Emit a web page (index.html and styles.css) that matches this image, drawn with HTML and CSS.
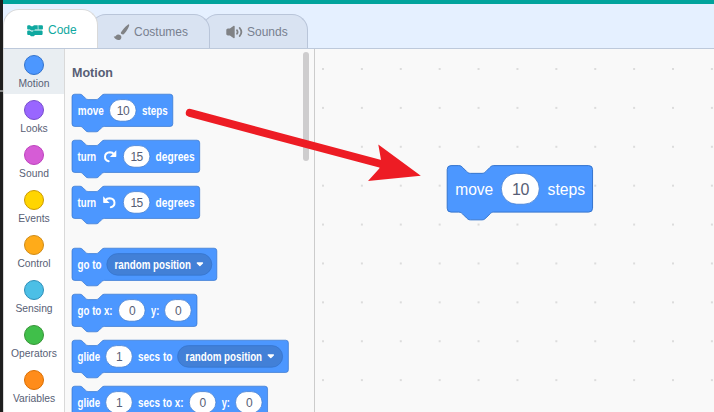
FILE: index.html
```html
<!DOCTYPE html>
<html lang="en">
<head>
<meta charset="utf-8">
<title>Code editor</title>
<link rel="stylesheet" href="styles.css">
</head>
<body>
<div class="app">
  <div class="edge"><i></i></div>
  <div class="editor">
    <header class="menubar"></header>
    <nav class="tabs">
      <div class="tab code">
        <svg width="17" height="13" viewBox="0 0 17 13"><path d="M.9 1.300H3l1 .9h1.900l1-.9h8.300l.7.700v2.900l-.7.700H8l-1 .9H4l-1-.9H.9l-.7-.7V2zM.9 6.600H3l1 .9h1.900l1-.9h8l.7.700v3l-.7.700H8l-1.200 1.200H4L2.800 11H.9l-.7-.7v-3z" fill="#0fa8a0"/><path d="M11 1l.2 4.500" stroke="#fff" stroke-width=".6"/></svg>
        <span>Code</span>
      </div>
      <div class="tab costumes">
        <svg width="17" height="17" viewBox="0 0 17 17"><path d="M16 .4c.5.4.1 1.8-.8 3.5-1.200 2.300-2.900 4.900-4.500 6.300-.7.6-1.400.5-2.100-.1-.8-.7-1-1.400-.4-2.200C9.700 5.700 12.300 2.700 14.300 1.200 15.200.5 15.700.2 16 .4zM.7 12.300c.8.4 1.500.3 2.200-.6 1.100-1.500 3.200-1.700 4.600-.4 1.200 1.200 1.200 3-.1 4.100-1.800 1.400-5.500.500-6.700-3.100z" fill="#808285"/></svg>
        <span>Costumes</span>
      </div>
      <div class="tab sounds">
        <svg width="17" height="14" viewBox="0 0 17 14"><path d="M.3 4.600 1.700 3.600h2.200L7.400.900c.6-.4 1.300-.2 1.300.6v11c0 .8-.7 1-1.300.6L3.900 10.400H1.700L.3 9.400z" fill="#808285"/><path d="M11 5.300c.8 1.200.8 2.400 0 3.500M13.700 3c2 2.400 2 5.600 0 8" fill="none" stroke="#808285" stroke-width="1.800" stroke-linecap="round"/></svg>
        <span>Sounds</span>
      </div>
    </nav>
    <main class="panes">
      <aside class="categories">
        <div class="cat selected"><i class="motion"></i>Motion</div>
        <div class="cat"><i class="looks"></i>Looks</div>
        <div class="cat"><i class="sound"></i>Sound</div>
        <div class="cat"><i class="events"></i>Events</div>
        <div class="cat"><i class="control"></i>Control</div>
        <div class="cat"><i class="sensing"></i>Sensing</div>
        <div class="cat"><i class="operators"></i>Operators</div>
        <div class="cat"><i class="variables"></i>Variables</div>
      </aside>
      <section class="palette">
        <h2>Motion</h2>
        <svg class="block" viewBox="0 0 240 46"><path class="shape" transform="translate(2 1.200) scale(.672)" d="M0 4a4 4 0 0 1 4-4H12c2 0 3 1 4 2l4 4c1 1 2 2 4 2h12c2 0 3-1 4-2l4-4c1-1 2-2 4-2H146a4 4 0 0 1 4 4v40a4 4 0 0 1-4 4H48c-2 0-3 1-4 2l-4 4c-1 1-2 2-4 2H24c-2 0-3-1-4-2l-4-4c-1-1-2-2-4-2H4a4 4 0 0 1-4-4z"/>
          <text x="7.800" y="21.600" textLength="26" lengthAdjust="spacingAndGlyphs">move</text><rect class="oval" x="39.500" y="6.600" width="26.600" height="21.600" rx="10.800"/><text class="num" x="53" y="21.600">10</text><text x="72" y="21.600" textLength="25.600" lengthAdjust="spacingAndGlyphs">steps</text></svg>
        <svg class="block" viewBox="0 0 240 46"><path class="shape" transform="translate(2 1.200) scale(.672)" d="M0 4a4 4 0 0 1 4-4H12c2 0 3 1 4 2l4 4c1 1 2 2 4 2h12c2 0 3-1 4-2l4-4c1-1 2-2 4-2H186a4 4 0 0 1 4 4v40a4 4 0 0 1-4 4H48c-2 0-3 1-4 2l-4 4c-1 1-2 2-4 2H24c-2 0-3-1-4-2l-4-4c-1-1-2-2-4-2H4a4 4 0 0 1-4-4z"/>
          <text x="7.600" y="21.600" textLength="18.600" lengthAdjust="spacingAndGlyphs">turn</text><g class="turn"><path class="arc" d="M38.700 22.200C33.800 21.200 33.400 13.500 40 13.200q2.600 0 4 2"/><path class="tip" d="M46.300 11.300v6q0 .6-.6.600h-5.800z"/></g><rect class="oval" x="53.300" y="6.600" width="26.600" height="21.600" rx="10.800"/><text class="num" x="66.600" y="21.600">15</text><text x="85.600" y="21.600" textLength="39" lengthAdjust="spacingAndGlyphs">degrees</text></svg>
        <svg class="block after-gap" viewBox="0 0 240 46"><path class="shape" transform="translate(2 1.200) scale(.672)" d="M0 4a4 4 0 0 1 4-4H12c2 0 3 1 4 2l4 4c1 1 2 2 4 2h12c2 0 3-1 4-2l4-4c1-1 2-2 4-2H186a4 4 0 0 1 4 4v40a4 4 0 0 1-4 4H48c-2 0-3 1-4 2l-4 4c-1 1-2 2-4 2H24c-2 0-3-1-4-2l-4-4c-1-1-2-2-4-2H4a4 4 0 0 1-4-4z"/>
          <text x="7.600" y="21.600" textLength="18.600" lengthAdjust="spacingAndGlyphs">turn</text><g class="turn" transform="translate(79.500 0) scale(-1 1)"><path class="arc" d="M38.700 22.200C33.800 21.200 33.400 13.500 40 13.200q2.600 0 4 2"/><path class="tip" d="M46.300 11.300v6q0 .6-.6.600h-5.800z"/></g><rect class="oval" x="53.300" y="6.600" width="26.600" height="21.600" rx="10.800"/><text class="num" x="66.600" y="21.600">15</text><text x="85.600" y="21.600" textLength="39" lengthAdjust="spacingAndGlyphs">degrees</text></svg>
        <svg class="block" viewBox="0 0 240 46"><path class="shape" transform="translate(2 1.200) scale(.672)" d="M0 4a4 4 0 0 1 4-4H12c2 0 3 1 4 2l4 4c1 1 2 2 4 2h12c2 0 3-1 4-2l4-4c1-1 2-2 4-2H211.500a4 4 0 0 1 4 4v40a4 4 0 0 1-4 4H48c-2 0-3 1-4 2l-4 4c-1 1-2 2-4 2H24c-2 0-3-1-4-2l-4-4c-1-1-2-2-4-2H4a4 4 0 0 1-4-4z"/>
          <text x="7.600" y="21.600" textLength="24" lengthAdjust="spacingAndGlyphs">go to</text><rect class="menu" x="36.800" y="6.600" width="105" height="21.600" rx="10.800"/><text x="44.500" y="21.600" textLength="76.500" lengthAdjust="spacingAndGlyphs">random position</text><path class="caret" d="M127.300 16h5.200l-2.600 2.600z"/></svg>
        <svg class="block" viewBox="0 0 240 46"><path class="shape" transform="translate(2 1.200) scale(.672)" d="M0 4a4 4 0 0 1 4-4H12c2 0 3 1 4 2l4 4c1 1 2 2 4 2h12c2 0 3-1 4-2l4-4c1-1 2-2 4-2H182a4 4 0 0 1 4 4v40a4 4 0 0 1-4 4H48c-2 0-3 1-4 2l-4 4c-1 1-2 2-4 2H24c-2 0-3-1-4-2l-4-4c-1-1-2-2-4-2H4a4 4 0 0 1-4-4z"/>
          <text x="7.600" y="21.600" textLength="35" lengthAdjust="spacingAndGlyphs">go to x:</text><rect class="oval" x="48.500" y="6.600" width="26.600" height="21.600" rx="10.800"/><text class="num" x="62" y="21.600">0</text><text x="81" y="21.600" textLength="8.200" lengthAdjust="spacingAndGlyphs">y:</text><rect class="oval" x="94.600" y="6.600" width="26.600" height="21.600" rx="10.800"/><text class="num" x="108" y="21.600">0</text></svg>
        <svg class="block" viewBox="0 0 240 46"><path class="shape" transform="translate(2 1.200) scale(.672)" d="M0 4a4 4 0 0 1 4-4H12c2 0 3 1 4 2l4 4c1 1 2 2 4 2h12c2 0 3-1 4-2l4-4c1-1 2-2 4-2H318a4 4 0 0 1 4 4v40a4 4 0 0 1-4 4H48c-2 0-3 1-4 2l-4 4c-1 1-2 2-4 2H24c-2 0-3-1-4-2l-4-4c-1-1-2-2-4-2H4a4 4 0 0 1-4-4z"/>
          <text x="7.600" y="21.600" textLength="22.500" lengthAdjust="spacingAndGlyphs">glide</text><rect class="oval" x="35.700" y="6.600" width="26.600" height="21.600" rx="10.800"/><text class="num" x="49.200" y="21.600">1</text><text x="68" y="21.600" textLength="34.300" lengthAdjust="spacingAndGlyphs">secs to</text><rect class="menu" x="107.600" y="6.600" width="105" height="21.600" rx="10.800"/><text x="115.600" y="21.600" textLength="76.500" lengthAdjust="spacingAndGlyphs">random position</text><path class="caret" d="M198.200 16h5.200l-2.600 2.600z"/></svg>
        <svg class="block" viewBox="0 0 240 46"><path class="shape" transform="translate(2 1.200) scale(.672)" d="M0 4a4 4 0 0 1 4-4H12c2 0 3 1 4 2l4 4c1 1 2 2 4 2h12c2 0 3-1 4-2l4-4c1-1 2-2 4-2H287a4 4 0 0 1 4 4v40a4 4 0 0 1-4 4H48c-2 0-3 1-4 2l-4 4c-1 1-2 2-4 2H24c-2 0-3-1-4-2l-4-4c-1-1-2-2-4-2H4a4 4 0 0 1-4-4z"/>
          <text x="7.600" y="21.600" textLength="22.500" lengthAdjust="spacingAndGlyphs">glide</text><rect class="oval" x="35.700" y="6.600" width="26.600" height="21.600" rx="10.800"/><text class="num" x="49.200" y="21.600">1</text><text x="68" y="21.600" textLength="45.500" lengthAdjust="spacingAndGlyphs">secs to x:</text><rect class="oval" x="119.300" y="6.600" width="26.600" height="21.600" rx="10.800"/><text class="num" x="132.700" y="21.600">0</text><text x="151.700" y="21.600" textLength="8.200" lengthAdjust="spacingAndGlyphs">y:</text><rect class="oval" x="165.500" y="6.600" width="26.600" height="21.600" rx="10.800"/><text class="num" x="179" y="21.600">0</text></svg>
        <div class="scrollbar"></div>
      </section>
      <section class="workspace">
        <svg class="placed" viewBox="0 0 150 60"><path class="shape" transform="translate(1.200 1.600) scale(.969)" d="M0 4a4 4 0 0 1 4-4H12c2 0 3 1 4 2l4 4c1 1 2 2 4 2h12c2 0 3-1 4-2l4-4c1-1 2-2 4-2H146a4 4 0 0 1 4 4v40a4 4 0 0 1-4 4H48c-2 0-3 1-4 2l-4 4c-1 1-2 2-4 2H24c-2 0-3-1-4-2l-4-4c-1-1-2-2-4-2H4a4 4 0 0 1-4-4z"/>
          <text x="9.200" y="31" textLength="38" lengthAdjust="spacingAndGlyphs">move</text><rect class="oval" x="55.300" y="9.400" width="38" height="30.800" rx="15.400"/><text class="num" x="74.600" y="31">10</text><text x="101.600" y="31" textLength="37.500" lengthAdjust="spacingAndGlyphs">steps</text></svg>
      </section>
    </main>
  </div>
</div>
<svg class="arrow" viewBox="180 90 260 120"><path class="shaft" d="M189.800 112.900 385 165"/><path class="head" d="M378.300 144.500 420.800 175.700 368 181 379.300 168.600 381.200 160.900z"/></svg>
</body>
</html>
```
FILE: styles.css
```css
* { box-sizing: border-box; }
body { margin: 0; width: 714px; height: 412px; overflow: hidden; font-family: "Liberation Sans", Arial, sans-serif; color: #575e75; }
.app { display: flex; height: 412px; background: #e5f0ff; }
.edge { width: 3px; background: #1e1e1e; padding-top: 90px; }
.edge i { display: block; height: 2px; background: #858585; }
.editor { flex: 1; min-width: 0; display: flex; flex-direction: column; }
.menubar { height: 4px; background: #00a39c; }
.tabs { height: 44px; display: flex; align-items: flex-end; }
.tab { display: flex; align-items: center; border: 1px solid #b9c5d9; border-bottom: 0; border-radius: 16px 16px 0 0; background: #d9e3f2; font-size: 12px; color: #78808f; height: 34px; }
.tab svg { flex: none; }
.tab span { transform: scaleY(1.12); }
.code { position: relative; z-index: 3; width: 95px; height: 39px; background: #fff; border-color: #d9d9d9; color: #0fa8a0; padding: 2px 0 0 23px; gap: 4px; }
.costumes { position: relative; z-index: 2; width: 120px; margin-left: -8px; padding: 1px 0 0 22px; gap: 4px; }
.sounds { width: 106px; margin-left: -8px; padding: 1px 0 0 23px; gap: 4px; }
.panes { flex: 1; min-height: 0; display: flex; border-top: 1px solid #bdc9db; background: #f9f9f9; }
.categories { width: 62px; background: #fff; border-left: 1px solid #d9d9d9; border-right: 1px solid #d9d9d9; }
.cat { height: 45px; padding-top: 6px; display: flex; flex-direction: column; align-items: center; gap: 2px; font-size: 10.300px; line-height: 13px; color: #575e75; }
.selected { background: #e9eef2; }
.cat i { width: 20px; height: 20px; flex: none; border-radius: 50%; border-width: 1px; border-style: solid; }
.motion { background: #4c97ff; border-color: #3373cc; }
.looks { background: #9966ff; border-color: #774dcb; }
.sound { background: #d65cd6; border-color: #bd42bd; }
.events { background: #ffd500; border-color: #cc9900; }
.control { background: #ffab19; border-color: #cf8b17; }
.sensing { background: #4cbfe6; border-color: #2e8eb8; }
.operators { background: #40bf4a; border-color: #389438; }
.variables { background: #ff8c1a; border-color: #db6e00; }
.palette { position: relative; width: 250px; padding: 16px 0 0 5px; border-right: 1px solid #ccc; overflow: hidden; }
.palette h2 { margin: 0 0 0 2px; height: 28px; font-size: 12.500px; line-height: 16px; transform: scaleY(1.08); transform-origin: 0 7px; }
.block { display: block; width: 240px; height: 46px; }
.after-gap { margin-bottom: 16px; }
.shape { fill: #4c97ff; stroke: #3373cc; stroke-width: 1; }
.block text { fill: #fff; font-size: 12.600px; font-weight: 700; }
.oval { fill: #fff; stroke: #3373cc; stroke-width: .7; }
.block .num, .placed .num { fill: #575e75; font-weight: 400; text-anchor: middle; }
.block .num { font-size: 12px; letter-spacing: -.5px; }
.menu { fill: #4280d7; stroke: #3373cc; stroke-width: .7; }
.caret { fill: #fff; stroke: #fff; stroke-width: 1.300; stroke-linejoin: round; }
.arc { fill: none; stroke: #fff; stroke-width: 2; stroke-linecap: round; }
.tip { fill: #fff; }
.scrollbar { position: absolute; top: 3px; right: 5px; width: 6px; height: 109px; border-radius: 3px; background: #cecdce; }
.workspace { flex: 1; padding: 115px 0 0 131px; background-image: radial-gradient(circle at 1px 1px, #dcdcdc 1px, transparent 1.300px); background-size: 38.900px 38.900px; background-position: 7px 19px; }
.placed { display: block; width: 150px; height: 60px; }
.placed text { fill: #fff; font-size: 16px; }
.placed .num { letter-spacing: -.4px; }
.arrow { position: absolute; left: 180px; top: 90px; width: 260px; height: 120px; pointer-events: none; }
.shaft { fill: none; stroke: #ed1c24; stroke-width: 8; stroke-linecap: round; }
.head { fill: #ed1c24; }
```
